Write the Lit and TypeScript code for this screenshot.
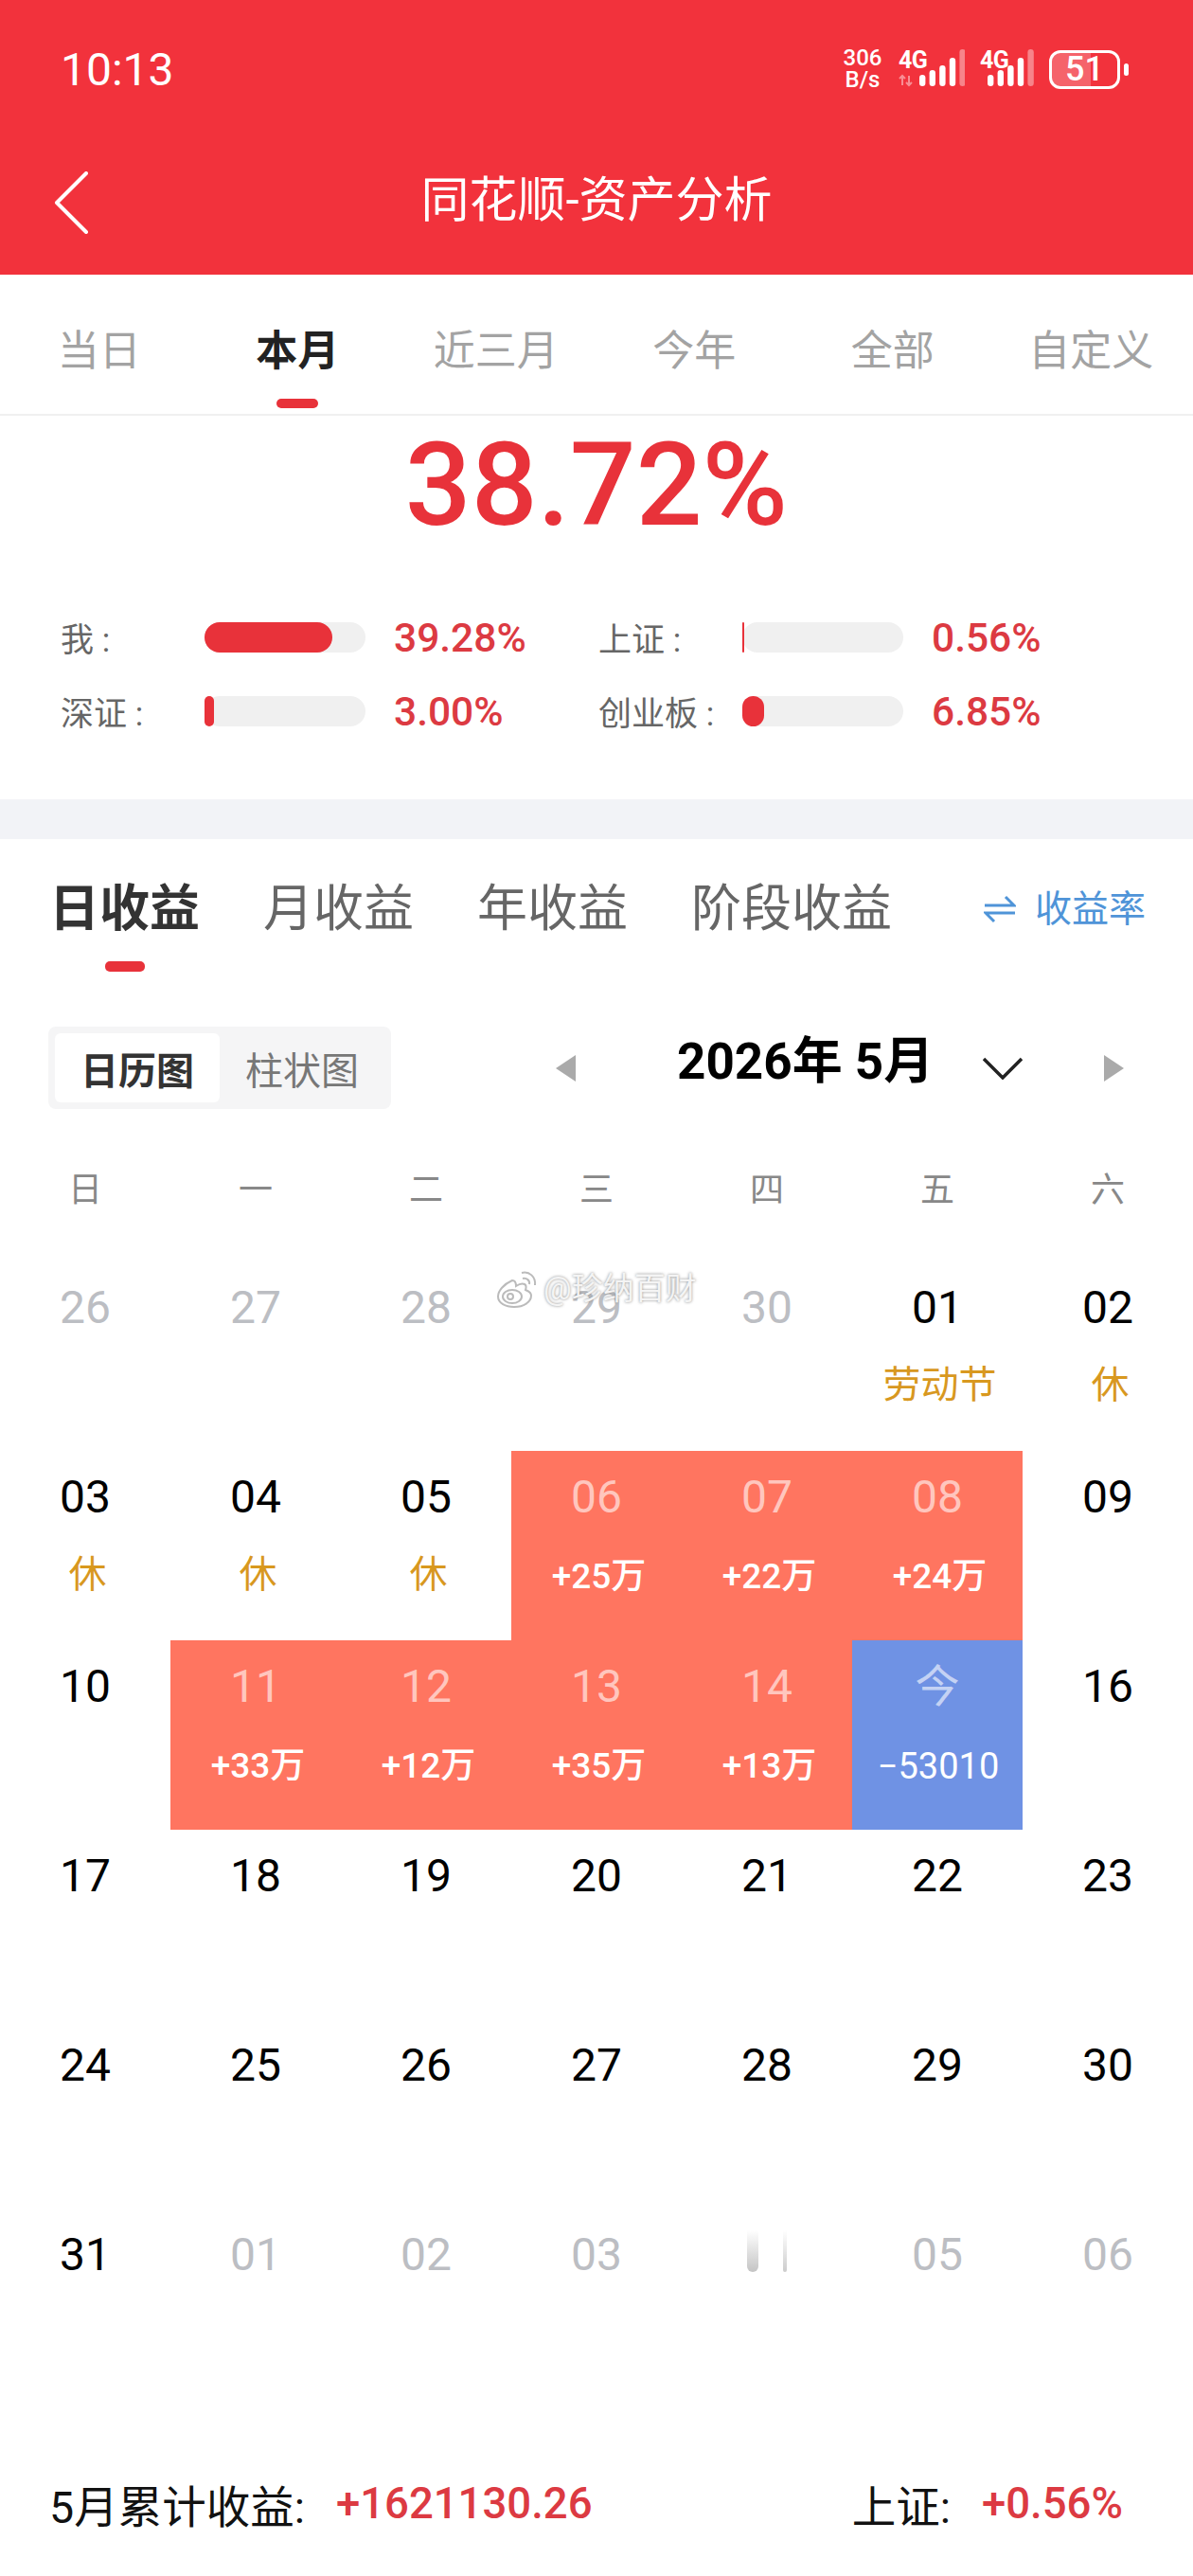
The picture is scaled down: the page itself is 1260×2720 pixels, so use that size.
import { LitElement, html, css, svg, nothing } from "lit";
import { customElement } from "lit/decorators.js";
import { classMap } from "lit/directives/class-map.js";

type Cell = {
  d: string;
  kind?: "muted" | "gain" | "loss" | "hidden";
  sub?: string;
  rest?: boolean;
};

const muted = (d: string): Cell => ({ d, kind: "muted" });
const rest = (d: string, sub = "休"): Cell => ({ d, sub, rest: true });
const gain = (d: string, sub: string): Cell => ({ d, sub, kind: "gain" });

const CELLS: Cell[] = [
  muted("26"), muted("27"), muted("28"), muted("29"), muted("30"), rest("01", "劳动节"), rest("02"),
  rest("03"), rest("04"), rest("05"), gain("06", "+25万"), gain("07", "+22万"), gain("08", "+24万"), { d: "09" },
  { d: "10" }, gain("11", "+33万"), gain("12", "+12万"), gain("13", "+35万"), gain("14", "+13万"),
  { d: "今", sub: "−53010", kind: "loss" }, { d: "16" },
  { d: "17" }, { d: "18" }, { d: "19" }, { d: "20" }, { d: "21" }, { d: "22" }, { d: "23" },
  { d: "24" }, { d: "25" }, { d: "26" }, { d: "27" }, { d: "28" }, { d: "29" }, { d: "30" },
  { d: "31" }, muted("01"), muted("02"), muted("03"), { d: "", kind: "hidden" }, muted("05"), muted("06"),
];

const STATS = [
  { label: "我 :", fill: 135, value: "39.28%" },
  { label: "上证 :", fill: 2, value: "0.56%" },
  { label: "深证 :", fill: 10, value: "3.00%" },
  { label: "创业板 :", fill: 23, value: "6.85%" },
];

// heights of the signal bars, tallest one is the faded spare bar
const signal = (x0: number) =>
  [12, 17, 22, 30, 39].map((h, i) =>
    svg`<rect x=${x0 + i * 10.6} y=${39 - h} width="6.4" height=${h} rx="3.2" fill="#fff" opacity=${i === 4 ? 0.4 : 1}></rect>`
  );

@customElement("app-root")
export class AppRoot extends LitElement {
  static styles = css`
    :host {
      display: block;
      width: 1260px;
      height: 2720px;
      background: #fff;
      position: relative;
      overflow: hidden;
      font-family: Roboto, "Noto Sans CJK SC", sans-serif;
      color: #111;
    }

    .top {
      height: 290px;
      background: #f2323c;
      color: #fff;
    }

    .status {
      height: 146px;
      display: flex;
      align-items: center;
      padding: 0 68px 0 64px;
    }

    .time {
      font-size: 48px;
      font-weight: 400;
    }

    .net {
      margin-left: auto;
      display: flex;
      align-items: center;
    }

    .speed {
      width: 46px;
      font-size: 24px;
      font-weight: 500;
      line-height: 23px;
      text-align: center;
    }

    .sim {
      position: relative;
      height: 42px;
      display: block;
    }

    .sim-a {
      width: 70px;
      margin-left: 15px;
    }

    .sim-b {
      width: 57px;
      margin-left: 16px;
    }

    .gen {
      font-size: 25px;
      font-weight: 700;
      line-height: 24px;
      display: block;
      letter-spacing: -0.5px;
    }

    .sim svg {
      position: absolute;
      left: 0;
      top: 0;
    }

    .battery {
      margin-left: 16px;
      width: 75px;
      height: 41px;
      box-sizing: border-box;
      border: 3px solid #fff;
      border-radius: 12px;
      font-size: 36px;
      line-height: 35px;
      font-weight: 500;
      text-align: center;
      background: linear-gradient(90deg, rgba(255, 255, 255, 0.24) 60%, transparent 60%);
    }

    .nub {
      width: 5px;
      height: 13px;
      margin-left: 4px;
      background: #fff;
      border-radius: 3px;
    }

    .nav {
      height: 122px;
      display: flex;
      align-items: center;
      justify-content: center;
      position: relative;
      font-size: 51px;
    }

    .back {
      position: absolute;
      left: 56px;
      top: 35px;
    }

    .tabs {
      display: grid;
      grid-template-columns: repeat(6, 209.5px);
      border-bottom: 2px solid #f0f0f0;
    }

    .tab {
      height: 147px;
      padding-top: 51px;
      box-sizing: border-box;
      display: flex;
      flex-direction: column;
      align-items: center;
      font-size: 44px;
      line-height: 60px;
      color: #a3a3a3;
    }

    .tab.on {
      color: #222;
      font-weight: 700;
    }

    .tab.on::after {
      content: "";
      width: 44px;
      height: 10px;
      margin-top: 20px;
      border-radius: 5px;
      background: #e8323a;
    }

    .pct {
      height: 146px;
      line-height: 146px;
      text-align: center;
      font-size: 123px;
      font-weight: 500;
      color: #e8323a;
    }

    .stats {
      display: grid;
      grid-template-columns: 568px 1fr;
      row-gap: 34px;
      padding: 66px 0 71px 64px;
    }

    .stat {
      display: flex;
      align-items: center;
      height: 44px;
    }

    .stat-label {
      width: 152px;
      margin-bottom: 2px;
      font-size: 35px;
      color: #666;
      white-space: nowrap;
    }

    .track {
      width: 170px;
      height: 32px;
      border-radius: 16px;
      background: #f0f0f0;
    }

    .fill {
      height: 100%;
      background: #e8323a;
      border-radius: 16px;
    }

    .stat-value {
      margin-left: 30px;
      font-size: 42.5px;
      font-weight: 500;
      color: #dc3a42;
    }

    .band {
      height: 42px;
      background: #f2f3f7;
    }

    .kinds {
      display: flex;
      align-items: flex-start;
      gap: 67px;
      height: 156px;
      padding: 44px 50px 0 52px;
      box-sizing: border-box;
    }

    .kind {
      font-size: 53px;
      line-height: 60px;
      color: #666;
      display: flex;
      flex-direction: column;
      align-items: center;
    }

    .kind.on {
      color: #333;
      font-weight: 700;
    }

    .kind.on::after {
      content: "";
      width: 42px;
      height: 11px;
      margin-top: 25px;
      border-radius: 5px;
      background: #e8323a;
    }

    .rate {
      margin-left: auto;
      display: flex;
      align-items: center;
      gap: 20px;
      font-size: 39px;
      line-height: 60px;
      color: #4f94d8;
    }

    .controls {
      display: flex;
      align-items: center;
      height: 87px;
      margin-top: 42px;
      padding-left: 51px;
    }

    .seg {
      width: 362px;
      height: 87px;
      box-sizing: border-box;
      padding: 7px;
      display: flex;
      background: #f5f5f6;
      border-radius: 8px;
      font-size: 40px;
    }

    .seg span {
      width: 174px;
      display: flex;
      align-items: center;
      justify-content: center;
      color: #777;
    }

    .seg .on {
      background: #fff;
      border-radius: 6px;
      color: #333;
      font-weight: 700;
    }

    .tri-l {
      margin-left: 174px;
    }

    .month {
      margin: 0 56px 24px 107px;
      font-size: 53px;
      font-weight: 700;
      color: #000;
      white-space: nowrap;
      width: 267px;
    }

    .tri-r {
      margin-left: 86px;
    }

    .weekdays,
    .grid {
      display: grid;
      grid-template-columns: repeat(7, 180px);
    }

    .weekdays {
      height: 161px;
      padding-top: 2px;
      box-sizing: border-box;
      align-items: center;
      font-size: 36px;
      color: #888;
      text-align: center;
    }

    .cell {
      height: 200px;
      padding-top: 21px;
      box-sizing: border-box;
      text-align: center;
    }

    .num {
      height: 56px;
      font-size: 48px;
      line-height: 56px;
      color: #000;
    }

    .sub {
      margin-top: 31px;
      padding-left: 5px;
      font-size: 37px;
      line-height: 50px;
      font-weight: 500;
    }

    .cell.rest .sub {
      margin-top: 29px;
      font-size: 40px;
      font-weight: 400;
      color: #d8981f;
    }

    .cell.loss .sub {
      padding-left: 2px;
      font-size: 38px;
      font-weight: 400;
    }

    .cell.muted .num {
      color: #bcbec3;
    }

    .cell.gain {
      background: #ff7560;
      color: #fff;
    }

    .cell.loss {
      background: #6f92e4;
      color: #fff;
    }

    .cell.gain .num,
    .cell.loss .num {
      color: rgba(255, 255, 255, 0.6);
    }

    .cell.loss .num {
      font-size: 47px;
    }

    .smear {
      display: flex;
      justify-content: center;
      gap: 26px;
      height: 44px;
      margin-top: 2px;
    }

    .smear i {
      width: 12px;
      border-radius: 0 0 6px 6px;
      background: linear-gradient(#fff, #c4c4c4);
    }

    .smear i + i {
      width: 4px;
      background: linear-gradient(#fff, #ccc);
    }

    .foot {
      display: flex;
      align-items: center;
      height: 60px;
      margin-top: 81px;
      padding: 0 74px 0 52px;
      font-size: 46.5px;
      color: #111;
    }

    .foot b {
      margin-left: 33px;
      font-size: 45.5px;
      font-weight: 500;
      color: #dc3a42;
    }

    .foot .sse {
      margin-left: auto;
    }

    .mark {
      position: absolute;
      left: 524px;
      top: 1338px;
      display: flex;
      align-items: center;
      gap: 6px;
      font-size: 33px;
      line-height: 46px;
      color: #f4f4f4;
      text-shadow: 0 0 3px rgba(110, 110, 110, 0.85);
    }
  `;

  renderCell(c: Cell) {
    const classes = classMap({
      cell: true,
      rest: !!c.rest,
      muted: c.kind === "muted",
      gain: c.kind === "gain",
      loss: c.kind === "loss",
    });
    return html`
      <div class=${classes}>
        ${c.kind === "hidden"
          ? html`<div class="smear"><i></i><i></i></div>`
          : html`<div class="num">${c.d}</div>`}
        ${c.sub ? html`<div class="sub">${c.sub}</div>` : nothing}
      </div>
    `;
  }

  render() {
    return html`
      <div class="top">
        <div class="status">
          <span class="time">10:13</span>
          <div class="net">
            <div class="speed">306<br />B/s</div>
            <div class="sim sim-a">
              <span class="gen">4G</span>
              <svg width="70" height="42" viewBox="0 0 70 42">
                <path d="M4 38V28M1 31l3-3 3 3M11 28v10M8 35l3 3 3-3" stroke="#fff" stroke-opacity=".45" stroke-width="2" fill="none"></path>
                ${signal(22)}
              </svg>
            </div>
            <div class="sim sim-b">
              <span class="gen">4G</span>
              <svg width="57" height="42" viewBox="0 0 57 42">${signal(8)}</svg>
            </div>
            <div class="battery">51</div>
            <div class="nub"></div>
          </div>
        </div>
        <div class="nav">
          <svg class="back" width="38" height="66" viewBox="0 0 38 66" fill="none">
            <path d="M35 2 4 33l31 31" stroke="#fff" stroke-width="4" stroke-linecap="round" stroke-linejoin="round"></path>
          </svg>
          同花顺-资产分析
        </div>
      </div>

      <div class="tabs">
        ${["当日", "本月", "近三月", "今年", "全部", "自定义"].map(
          (t, i) => html`<div class="tab ${i === 1 ? "on" : ""}">${t}</div>`
        )}
      </div>

      <div class="pct">38.72%</div>

      <div class="stats">
        ${STATS.map(
          (s) => html`
            <div class="stat">
              <span class="stat-label">${s.label}</span>
              <div class="track"><div class="fill" style="width:${s.fill}px"></div></div>
              <span class="stat-value">${s.value}</span>
            </div>
          `
        )}
      </div>

      <div class="band"></div>

      <div class="kinds">
        <div class="kind on">日收益</div>
        <div class="kind">月收益</div>
        <div class="kind">年收益</div>
        <div class="kind">阶段收益</div>
        <div class="rate">
          <svg width="34" height="30" viewBox="0 0 34 30" fill="none">
            <path d="M1 11h31L23 2M33 19H2l9 9" stroke="#4f94d8" stroke-width="3"></path>
          </svg>
          收益率
        </div>
      </div>

      <div class="controls">
        <div class="seg"><span class="on">日历图</span><span>柱状图</span></div>
        <svg class="tri-l" width="21" height="28" viewBox="0 0 21 28"><path d="M21 0v28L0 14z" fill="#aaa"></path></svg>
        <div class="month">2026年 5月</div>
        <svg width="42" height="24" viewBox="0 0 42 24" fill="none">
          <path d="M1 2l20 20L41 2" stroke="#222" stroke-width="3.5"></path>
        </svg>
        <svg class="tri-r" width="21" height="28" viewBox="0 0 21 28"><path d="M0 0v28l21-14z" fill="#aaa"></path></svg>
      </div>

      <div class="weekdays">
        ${["日", "一", "二", "三", "四", "五", "六"].map((w) => html`<span>${w}</span>`)}
      </div>

      <div class="grid">${CELLS.map((c) => this.renderCell(c))}</div>

      <div class="foot">
        <span>5月累计收益:</span><b>+1621130.26</b>
        <span class="sse">上证:</span><b>+0.56%</b>
      </div>

      <div class="mark">
        <svg width="44" height="42" viewBox="0 0 44 42" fill="none" stroke="#bbb" stroke-width="2">
          <path d="M17 12C8 16 2 23 2 29c0 7 8 11 17 11 10 0 18-5 18-12 0-4-4-5-6-6 1-3 1-5-1-6-2-1-6 0-9 2 0-3-1-6-4-6z" fill="#fff"></path>
          <ellipse cx="17" cy="29" rx="10" ry="7"></ellipse>
          <circle cx="15" cy="29" r="3"></circle>
          <path d="M27 4c8-2 15 4 14 13M28 10c4-1 8 2 7 6"></path>
        </svg>
        <span>@珍纳百财</span>
      </div>
    `;
  }
}
